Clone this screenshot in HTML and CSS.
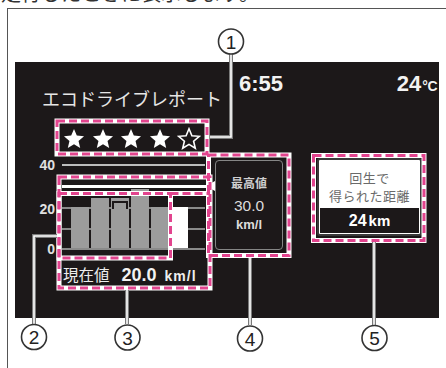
FILE: index.html
```html
<!DOCTYPE html>
<html lang="ja">
<head>
<meta charset="utf-8">
<link rel="stylesheet" href="styles.css">
</head>
<body>
<div class="lead"><span>走行したときに表示します。</span></div>
<div class="frame">
  <div class="screen">
    <div class="head">
      <div class="title">エコドライブレポート</div>
      <div class="clock">6:55</div>
      <div class="temp">24<span class="unit">°C</span></div>
    </div>
    <div class="main">
      <div class="left">
        <div class="stars">
          <svg class="star" viewBox="0 0 24 24"><polygon points="12,1 15.06,8.29 22.94,8.95 16.95,14.11 18.76,21.8 12,17.7 5.24,21.8 7.05,14.11 1.06,8.95 8.94,8.29"/></svg>
          <svg class="star" viewBox="0 0 24 24"><polygon points="12,1 15.06,8.29 22.94,8.95 16.95,14.11 18.76,21.8 12,17.7 5.24,21.8 7.05,14.11 1.06,8.95 8.94,8.29"/></svg>
          <svg class="star" viewBox="0 0 24 24"><polygon points="12,1 15.06,8.29 22.94,8.95 16.95,14.11 18.76,21.8 12,17.7 5.24,21.8 7.05,14.11 1.06,8.95 8.94,8.29"/></svg>
          <svg class="star" viewBox="0 0 24 24"><polygon points="12,1 15.06,8.29 22.94,8.95 16.95,14.11 18.76,21.8 12,17.7 5.24,21.8 7.05,14.11 1.06,8.95 8.94,8.29"/></svg>
          <svg class="star star-empty" viewBox="0 0 24 24"><polygon points="12,1.8 14.9,8.7 22.3,9.3 16.6,14.2 18.3,21.2 12,17.4 5.7,21.2 7.4,14.2 1.7,9.3 9.1,8.7"/></svg>
        </div>
        <div class="axis"><span class="tick">40</span><span class="rule"></span></div>
        <div class="maxrow"><span class="maxline"></span><span class="arrow"></span></div>
        <div class="chart">
          <div class="ylabels"><span class="y20">20</span><span class="y0">0</span></div>
          <div class="plot">
            <div class="bar" style="height:41px"></div>
            <div class="bar" style="height:50px"></div>
            <div class="bar bar-notch" style="height:50px"></div>
            <div class="bar" style="height:59px"></div>
            <div class="bar" style="height:41px"></div>
            <div class="bar bar-now" style="height:41px"></div>
          </div>
        </div>
        <div class="now"><span class="now-l">現在値</span><span class="now-v">20.0</span><span class="now-u">km/l</span></div>
      </div>
      <div class="maxbox">
        <div class="mx-l">最高値</div>
        <div class="mx-v">30.0</div>
        <div class="mx-u">km/l</div>
      </div>
      <div class="regen">
        <div class="rg-t">回生で</div>
        <div class="rg-t">得られた距離</div>
        <div class="rg-band"><span class="rg-v">24</span><span class="rg-u">km</span></div>
      </div>
    </div>
  </div>
</div>
<svg class="notes" width="446" height="368" viewBox="0 0 446 368">
  <g fill="none" stroke="#fff" stroke-width="5">
    <rect x="57" y="121" width="150" height="33"/>
    <rect x="59" y="177" width="151" height="111"/>
    <rect x="59" y="193.5" width="111.5" height="64.5"/>
    <path d="M170.5 193.5 H210"/>
    <rect x="208.5" y="155" width="80.5" height="100.5"/>
    <rect x="313.5" y="155.5" width="110.5" height="85"/>
  </g>
  <g fill="none" stroke="#e2448e" stroke-width="3" stroke-dasharray="8 4">
    <rect x="57" y="121" width="150" height="33"/>
    <rect x="59" y="177" width="151" height="111"/>
    <rect x="59" y="193.5" width="111.5" height="64.5"/>
    <path d="M170.5 193.5 H210"/>
    <rect x="208.5" y="155" width="80.5" height="100.5"/>
    <rect x="313.5" y="155.5" width="110.5" height="85"/>
  </g>
  <g fill="none" stroke="#7a7a7a" stroke-width="4">
    <path d="M231 54 V137 H210"/>
    <path d="M34 324 V236 H57"/>
    <path d="M127 290 V324"/>
    <path d="M250 258 V325"/>
    <path d="M374 242 V325"/>
  </g>
  <g fill="none" stroke="#fff" stroke-width="1.6">
    <path d="M231 54 V137 H210"/>
    <path d="M34 324 V236 H57"/>
    <path d="M127 290 V324"/>
    <path d="M250 258 V325"/>
    <path d="M374 242 V325"/>
  </g>
  <g class="callout">
    <circle cx="231" cy="41.5" r="12.5"/><text x="231" y="48.5">1</text>
    <circle cx="34" cy="337" r="12.5"/><text x="34" y="344">2</text>
    <circle cx="127.5" cy="337.5" r="12.5"/><text x="127.5" y="344.5">3</text>
    <circle cx="250" cy="338.5" r="12.5"/><text x="250" y="345.5">4</text>
    <circle cx="374.5" cy="338" r="12.5"/><text x="374.5" y="345">5</text>
  </g>
</svg>
</body>
</html>
```

FILE: styles.css
```css
* { box-sizing: border-box; }

body {
  margin: 0;
  width: 446px;
  height: 368px;
  overflow: hidden;
  position: relative;
  background: #fff;
  font-family: "Liberation Sans", "Noto Sans CJK JP", sans-serif;
}

.lead {
  height: 8px;
  overflow: hidden;
  color: #333;
  font: 20px/20px "Noto Sans CJK JP", sans-serif;
}
.lead span {
  display: block;
  margin-top: -17px;
  padding-left: 1px;
  white-space: nowrap;
}

.frame {
  margin-left: 7px;
  height: 360px;
  border-top: 1px solid #555;
  border-left: 1px solid #555;
  padding: 53px 0 0 7px;
}

.screen {
  width: 424px;
  height: 256px;
  background: #1c1819;
  color: #eee;
}

/* header */
.head {
  display: flex;
  align-items: flex-start;
  height: 50px;
}
.title {
  margin: 26px 0 0 27px;
  font: 18px/20px "Noto Sans CJK JP", sans-serif;
  color: #e6e6e6;
  white-space: nowrap;
}
.clock {
  margin: 11px 0 0 17px;
  font: bold 22px/22px "Liberation Sans", sans-serif;
  color: #f2f2f2;
}
.temp {
  margin: 11px 2px 0 auto;
  font: bold 22px/22px "Liberation Sans", sans-serif;
  color: #f2f2f2;
}
.temp .unit {
  font-size: 14px;
  letter-spacing: -0.5px;
  margin-left: 1px;
}

/* main */
.main {
  display: flex;
  align-items: flex-start;
}
.left {
  width: 176px;
  margin-left: 24px;
  display: flex;
  flex-direction: column;
}

.stars {
  display: flex;
  align-items: center;
  gap: 6.5px;
  height: 19px;
  margin-top: 17px;
  padding-left: 24px;
}
.star {
  width: 22px;
  height: 22px;
  flex: none;
  fill: #fff;
}
.star-empty {
  width: 24px;
  height: 24px;
  fill: none;
  stroke: #fff;
  stroke-width: 1.6;
}

.axis {
  display: flex;
  align-items: center;
  height: 12px;
  margin-top: 11px;
}
.tick {
  width: 16px;
  text-align: right;
  font: bold 14px/12px "Liberation Sans", sans-serif;
  color: #e0e0e0;
}
.rule {
  width: 143px;
  height: 2px;
  margin-left: 7px;
  background: #bdbdbd;
}

.maxrow {
  display: flex;
  align-items: center;
  height: 10px;
  margin-top: 10px;
}
.maxline {
  width: 145px;
  height: 3px;
  margin-left: 23px;
  background: #fff;
}
.arrow {
  width: 0;
  height: 0;
  border-top: 5px solid transparent;
  border-bottom: 5px solid transparent;
  border-right: 9px solid #fff;
}

.chart {
  display: flex;
  height: 60px;
  margin-top: 5px;
}
.ylabels {
  width: 16px;
  display: flex;
  flex-direction: column;
  align-items: flex-end;
  font: bold 14px/12px "Liberation Sans", sans-serif;
  color: #e0e0e0;
}
.y20 { margin-top: 6.5px; }
.y0 { margin-top: 28.5px; }

.plot {
  width: 143px;
  height: 60px;
  margin-left: 7px;
  display: flex;
  align-items: flex-end;
  gap: 2px;
  padding: 0 0 8px 9px;
  background:
    linear-gradient(#8a8a8a, #8a8a8a) 0 11px / 100% 2px no-repeat,
    linear-gradient(#8a8a8a, #8a8a8a) 0 32px / 100% 2px no-repeat,
    linear-gradient(#8a8a8a, #8a8a8a) 0 52px / 100% 2px no-repeat;
}
.bar {
  width: 18px;
  flex: none;
  background: #9c9c9c;
  position: relative;
}
.bar-notch::before {
  content: "";
  position: absolute;
  left: 1px;
  right: 1px;
  top: 3px;
  height: 6px;
  border: 2px solid #1c1819;
  border-bottom: none;
}
.bar-now {
  width: 15px;
  margin-left: 2px;
  background: #fff;
}

.now {
  display: flex;
  align-items: baseline;
  margin-top: 7px;
  padding-left: 24px;
  line-height: 22px;
  white-space: nowrap;
}
.now-l {
  font: 15.5px/22px "Noto Sans CJK JP", sans-serif;
  color: #ededed;
}
.now-v {
  margin-left: 12px;
  font: bold 18px/22px "Liberation Sans", sans-serif;
  color: #f2f2f2;
}
.now-u {
  margin-left: 8px;
  font: bold 14px/22px "Liberation Sans", sans-serif;
  letter-spacing: 1px;
  color: #eee;
}

/* max box */
.maxbox {
  width: 68px;
  height: 90px;
  margin-top: 48px;
  border: 1.5px solid #858585;
  border-radius: 4px;
  display: flex;
  flex-direction: column;
  align-items: center;
  padding-top: 14.5px;
  color: #dcdcdc;
}
.mx-l {
  font: bold 12px/14px "Noto Sans CJK JP", sans-serif;
  color: #cfcfcf;
}
.mx-v {
  margin-top: 7.5px;
  font: 15.5px/18px "Liberation Sans", sans-serif;
}
.mx-u {
  margin-top: 2px;
  font: bold 13px/16px "Liberation Sans", sans-serif;
}

/* regen box */
.regen {
  width: 105px;
  margin: 46px 0 0 34px;
  background: #fff;
  border: 2px solid #3a3a3a;
  border-radius: 3px;
  padding-top: 9px;
  text-align: center;
}
.rg-t {
  height: 18px;
  font: 13px/18px "Noto Sans CJK JP", sans-serif;
  letter-spacing: 0.5px;
  color: #6a6a6a;
  white-space: nowrap;
}
.rg-band {
  height: 25px;
  margin: 3px 1px 1px;
  background: #1c1819;
  color: #fff;
  display: flex;
  align-items: center;
  justify-content: center;
  font: bold 16px/25px "Liberation Sans", sans-serif;
}
.rg-u {
  margin-left: 2px;
  font-size: 15px;
}

/* annotation overlay */
.notes {
  position: absolute;
  left: 0;
  top: 0;
  pointer-events: none;
}
.callout circle {
  fill: #fff;
  stroke: #333;
  stroke-width: 1.6;
}
.callout text {
  font: 19px "Liberation Sans", sans-serif;
  fill: #222;
  text-anchor: middle;
}
```
